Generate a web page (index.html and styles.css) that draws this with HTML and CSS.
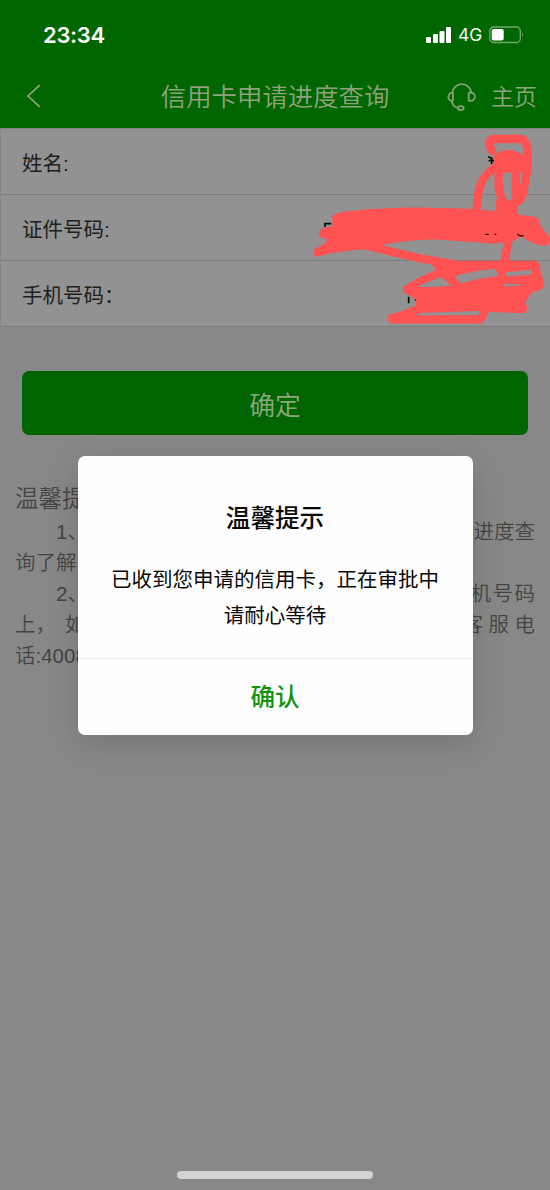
FILE: index.html
```html
<!DOCTYPE html>
<html lang="zh-CN">
<head>
<meta charset="utf-8">
<title>信用卡申请进度查询</title>
<link rel="stylesheet" href="styles.css">
</head>
<body>
<div class="screen">
  <header class="top">
    <div class="status">
      <span class="time">23:34</span>
      <div class="signals">
        <svg class="bars" width="26" height="18" viewBox="0 0 26 18"><g fill="#fff"><rect x="0" y="11" width="5" height="6" rx="1"/><rect x="7" y="8" width="5" height="9" rx="1"/><rect x="13.5" y="5" width="5" height="12" rx="1"/><rect x="20" y="1" width="5" height="16" rx="1"/></g></svg>
        <span class="net">4G</span>
        <svg class="battery" width="36" height="18" viewBox="0 0 36 18"><rect x=".8" y="1" width="30.5" height="15.5" rx="4" fill="none" stroke="#72a96d" stroke-width="1.3"/><rect x="2.7" y="3" width="12" height="11.5" rx="2" fill="#fff"/><path d="M33 6.5q2 2.2 0 4.5z" fill="#72a96d"/></svg>
      </div>
    </div>
    <nav class="nav">
      <svg class="back" width="16" height="24" viewBox="0 0 16 24"><path d="M14 1 2 12l12 11" fill="none" stroke="#90a27d" stroke-width="1.7"/></svg>
      <h1 class="title">信用卡申请进度查询</h1>
      <svg class="headset" width="30" height="30" viewBox="0 0 30 30"><g fill="none" stroke="#85a075" stroke-width="1.8"><path d="M5.2 11C6 5.500 10 2 15 2s9 3.500 9.800 9"/><path d="M6 11C3 10.500 1.400 12.500 1.400 15S3 19 6 18.500z"/><path d="M22 10.700c4-.7 6.200 1 6.200 4s-2 4.700-6.200 4z"/><path d="M4.700 19c.6 3.800 3 6.500 6.300 6.900"/><ellipse cx="14" cy="26.200" rx="2.900" ry="2"/></g></svg>
      <span class="home">主页</span>
    </nav>
  </header>
  <section class="form">
    <div class="row">姓名:</div>
    <div class="row">证件号码:</div>
    <div class="row">手机号码：</div>
  </section>
  <button class="submit">确定</button>
  <section class="notes">
    <h2 class="notes-title">温馨提示</h2>
    <p class="line indent"><span>1、</span><span>进度查</span></p>
    <p class="line"><span>询了解</span></p>
    <p class="line indent"><span>2、</span><span class="spread">机号码</span></p>
    <p class="line"><span>上，<span class="word">如</span></span><span class="wide">客服电</span></p>
    <p class="line"><span>话:<span class="phone">4008</span></span></p>
  </section>

  <svg class="scribble" width="260" height="215" viewBox="0 0 780 645">
    <g fill="none" stroke="#050805" stroke-width="5">
      <path d="M594 110l10 4M596 122h18M605 112v20"/>
      <path d="M105 321v-10h19M356 530v20M374 540h4M708 534l-4 13"/>
    </g>
    <path d="M645 150L662 155V240L645 225z" fill="#929292"/>
    <g fill="none" stroke="#ff5252" stroke-width="25" stroke-linecap="round" stroke-linejoin="round">
      <path d="M606 92Q588 60 612 57H690Q708 57 712 90L712 150L698 225Q690 250 655 255Q636 250 626 205V130"/>
      <path d="M621 138C570 170 564 205 560 263"/>
      <path d="M677 145V245"/>
      <path d="M656 260L660 340L632 480"/>
      <path d="M84 397C105 390 160 380 220 375L390 415L505 435H735Q742 450 740 485"/>
      <path d="M470 450C435 465 390 480 352 508L390 530"/>
      <path d="M485 455L500 485M306 598H570Q579 590 584 570M306 594C340 590 370 568 400 565"/>
      <path d="M735 312L763 358"/>
    </g>
    <g fill="#ff5252">
      <path d="M612 105Q655 75 699 105L713 158H613z"/>
      <path d="M616 235Q640 255 685 245L681 285H620z"/>
      <path d="M126 290Q138 276 180 273Q310 258 460 264Q590 266 665 281L738 291Q752 300 749 323L775 345Q788 378 760 377Q728 372 695 350L666 364L610 371Q510 363 430 358Q320 362 240 384L120 398L72 410L74 388L105 370L112 357Q85 355 86 338Q92 322 128 318z"/>
      <path d="M345 499L390 501Q470 501 510 491Q560 475 640 466L745 455Q774 490 754 509L730 516Q700 540 710 557Q718 575 698 579Q620 578 560 573L450 577L378 579L377 532Q340 525 340 509z"/>
      <path d="M420 425H745V460L619 454Q560 457 492 465L512 491L482 495L450 470z"/>
    </g>
    <path d="M494 470Q555 450 617 447V468Q560 474 513 490zM647 460Q690 450 725 450V463Q690 468 647 469zM642 492L701 493Q675 502 642 498zM386 499Q420 480 457 475L474 492Q430 503 386 501z" fill="#929292"/>
    <path d="M586 343h10M614 343h5M682 343q8 7 18 4" fill="none" stroke="#300808" stroke-width="4"/>
  </svg>

  <div class="overlay">
    <div class="dialog">
      <div class="dialog-body">
        <h2 class="dialog-title">温馨提示</h2>
        <p class="message">已收到您申请的信用卡，正在审批中<br>请耐心等待</p>
      </div>
      <button class="confirm">确认</button>
    </div>
  </div>
  <div class="indicator"></div>
</div>
</body>
</html>
```
FILE: styles.css
```css
* { box-sizing: border-box; margin: 0; padding: 0; }
body { font-family: "Liberation Sans", "Noto Sans CJK SC", sans-serif; background: #888; }
button { border: 0; font-family: inherit; }
.screen { position: relative; width: 550px; height: 1190px; overflow: hidden; background: #888; }
.top { height: 128px; background: #006700; }
.status { display: flex; justify-content: space-between; align-items: center; height: 70px; padding: 0 25px 0 43px; }
.time { font: 600 22px/26px Inter, sans-serif; color: #fff; letter-spacing: -.3px; }
.signals { display: flex; align-items: center; }
.net { width: 31px; margin-left: 6px; font: 400 17.5px/20px Inter, sans-serif; color: #f2f8ef; }
.nav { display: flex; align-items: center; height: 52px; padding: 0 13px 0 26px; color: #90a27d; }
.title { margin-left: 119px; padding-top: 2px; font-size: 25.4px; font-weight: 350; line-height: 36px; white-space: nowrap; }
.headset { margin-left: 58px; margin-top: 2px; }
.home { margin-left: 14px; padding-top: 2px; font-size: 23px; font-weight: 350; line-height: 36px; white-space: nowrap; }
.form { height: 199px; border-top: 1px solid #7e847e; border-bottom: 1px solid #7d7d7d; border-left: 1px solid #858585; background: #929292; }
.row { display: flex; align-items: center; height: 66px; padding: 0 21px; border-bottom: 1px solid #7c7c7c; font-size: 20.5px; color: #202020; }
.row:last-child { border-bottom: 0; }
.submit { display: block; width: 506px; height: 64px; margin: 44px 22px 0; border-radius: 7px; background: #006400; color: #8ca87f; font-size: 25.8px; font-weight: 350; }
.notes { padding: 47px 15px 0; color: #444; }
.notes-title { font-size: 23.5px; font-weight: 350; line-height: 34px; }
.line { display: flex; justify-content: space-between; height: 31px; font-size: 20.5px; font-weight: 350; line-height: 31px; white-space: nowrap; }
.indent { padding-left: 41px; }
.spread { letter-spacing: 1.500px; margin-right: -1.500px; }
.wide { letter-spacing: 5.500px; margin-right: -5.500px; }
.word { margin-left: 9px; }
.scribble { position: absolute; left: 290px; top: 120px; }
.overlay { position: absolute; inset: 0; display: flex; align-items: center; justify-content: center; }
.dialog { display: flex; flex-direction: column; width: 395px; height: 279px; border-radius: 7px; background: #fefefe; box-shadow: 0 8px 32px rgba(0, 0, 0, .15); }
.dialog-body { height: 203px; padding-top: 45px; border-bottom: 1px solid #ededed; text-align: center; color: #080808; }
.dialog-title { font-size: 24.6px; font-weight: 500; line-height: 36px; }
.message { margin-top: 25px; font-size: 20.5px; line-height: 36px; white-space: nowrap; }
.confirm { flex: 1; padding-bottom: 3px; background: none; color: #109410; font-size: 24.6px; font-weight: 500; }
.indicator { position: absolute; left: 177px; bottom: 11px; width: 196px; height: 8px; border-radius: 4px; background: #d3d3d3; }
```
